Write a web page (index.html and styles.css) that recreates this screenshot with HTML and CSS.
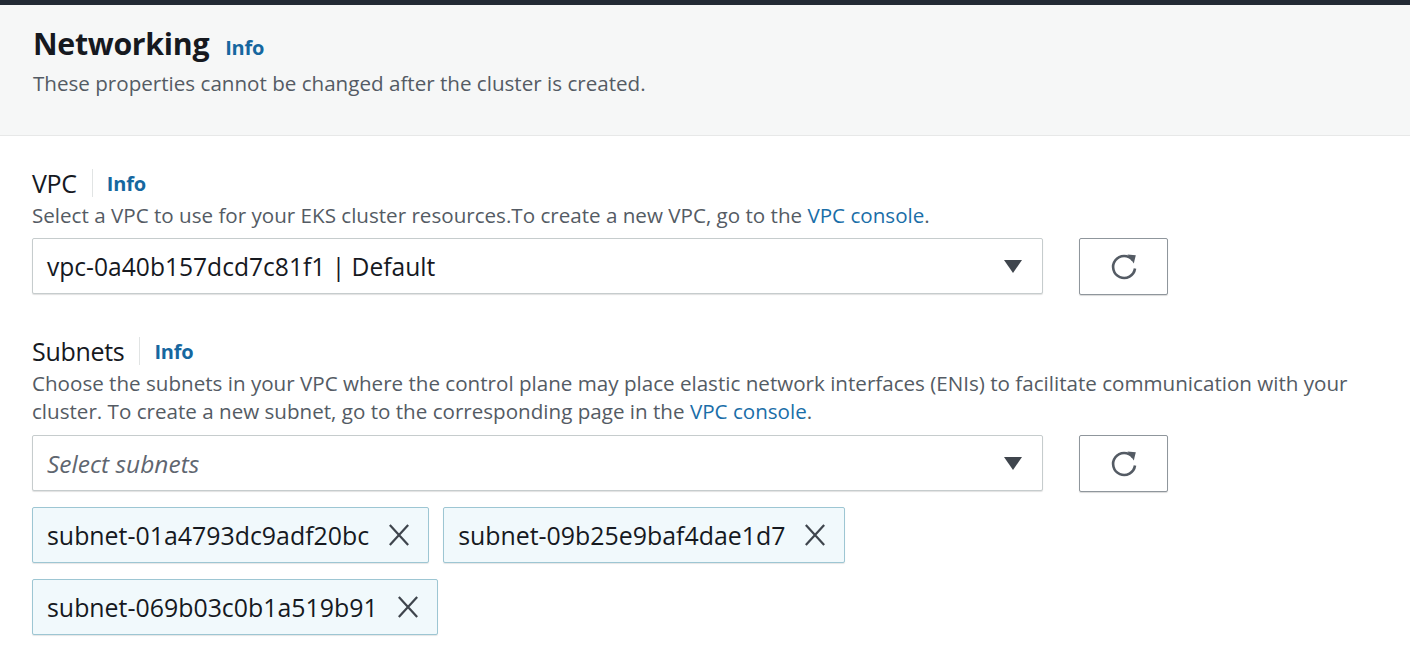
FILE: index.html
```html
<!DOCTYPE html>
<html>
<head>
<meta charset="utf-8">
<link rel="stylesheet" href="styles.css">
</head>
<body>
<div class="topbar"></div>
<section class="header">
  <div class="title-row">
    <h2 class="title">Networking</h2>
    <a class="info">Info</a>
  </div>
  <p class="desc">These properties cannot be changed after the cluster is created.</p>
</section>
<section class="content">
  <div class="field">
    <div class="label-row">
      <span class="label">VPC</span>
      <span class="sep"></span>
      <a class="info">Info</a>
    </div>
    <p class="desc">Select a VPC to use for your EKS cluster resources.To create a new VPC, go to the <a class="link">VPC console</a>.</p>
    <div class="control-row">
      <div class="select">
        <span class="value">vpc-0a40b157dcd7c81f1 | Default</span>
        <span class="caret"></span>
      </div>
      <button class="refresh">
        <svg width="34" height="34" viewBox="0 0 34 34"><path d="M25.8 10.2 A11 11 0 1 0 28 18.5" fill="none" stroke="#545b64" stroke-width="2.6"/><path d="M20.5 4.5 L28.8 5.2 L26.8 13.5 Z" fill="#545b64"/></svg>
      </button>
    </div>
  </div>
  <div class="field field-subnets">
    <div class="label-row">
      <span class="label">Subnets</span>
      <span class="sep"></span>
      <a class="info">Info</a>
    </div>
    <p class="desc">Choose the subnets in your VPC where the control plane may place elastic network interfaces (ENIs) to facilitate communication with your cluster. To create a new subnet, go to the corresponding page in the <a class="link">VPC console</a>.</p>
    <div class="control-row">
      <div class="select">
        <span class="placeholder">Select subnets</span>
        <span class="caret"></span>
      </div>
      <button class="refresh">
        <svg width="34" height="34" viewBox="0 0 34 34"><path d="M25.8 10.2 A11 11 0 1 0 28 18.5" fill="none" stroke="#545b64" stroke-width="2.6"/><path d="M20.5 4.5 L28.8 5.2 L26.8 13.5 Z" fill="#545b64"/></svg>
      </button>
    </div>
    <div class="tokens">
      <div class="token"><span>subnet-01a4793dc9adf20bc</span><svg class="x" width="24" height="24" viewBox="0 0 24 24"><path d="M2 1 L22 23 M22 1 L2 23" stroke="#3f454d" stroke-width="2.4"/></svg></div>
      <div class="token"><span>subnet-09b25e9baf4dae1d7</span><svg class="x" width="24" height="24" viewBox="0 0 24 24"><path d="M2 1 L22 23 M22 1 L2 23" stroke="#3f454d" stroke-width="2.4"/></svg></div>
      <div class="token"><span>subnet-069b03c0b1a519b91</span><svg class="x" width="24" height="24" viewBox="0 0 24 24"><path d="M2 1 L22 23 M22 1 L2 23" stroke="#3f454d" stroke-width="2.4"/></svg></div>
    </div>
  </div>
</section>
</body>
</html>
```
FILE: styles.css
```css
* { box-sizing: border-box; }
html, body { margin: 0; padding: 0; }
body {
  background: #ffffff;
  font-family: "Open Sans", "Noto Sans", sans-serif;
  color: #16191f;
  width: 1410px;
  height: 656px;
  overflow: hidden;
}
.topbar {
  height: 5px;
  background: #232a35;
}
.header {
  background: #f6f7f7;
  border-bottom: 1px solid #e7e8e8;
  padding: 21px 32px 38px 33px;
}
.title-row {
  display: flex;
  align-items: baseline;
  gap: 16px;
  height: 36px;
  line-height: 36px;
}
.title {
  margin: 0;
  font-size: 30.3px;
  font-weight: 700;
  letter-spacing: -0.3px;
  color: #16191f;
}
.info {
  color: #16679f;
  font-weight: 700;
  font-size: 20px;
  letter-spacing: -0.2px;
}
.header .desc { margin-top: 7px; }
.desc {
  margin: 0;
  font-size: 20.6px;
  line-height: 28px;
  color: #545b64;
  letter-spacing: 0;
  max-width: 1380px;
}
.link { color: #1a6ea8; }
.content {
  padding: 33px 32px 0 32px;
}
.label-row {
  display: flex;
  align-items: center;
  height: 28px;
}
.label {
  font-size: 25px;
  letter-spacing: -0.3px;
  color: #16191f;
}
.sep {
  width: 1px;
  height: 28px;
  background: #e1e4e4;
  margin: 0 14px 0 15px;
}
.field .desc { margin-top: 4px; }
.control-row {
  display: flex;
  gap: 36px;
  margin-top: 9px;
}
.select {
  width: 1011px;
  height: 56px;
  border: 1px solid #c6cccd;
  border-radius: 2px;
  box-shadow: 0 1px 1px rgba(0,0,0,0.12);
  display: flex;
  align-items: center;
  justify-content: space-between;
  padding: 0 20px 0 14px;
  background: #fff;
}
.value {
  font-size: 24.6px;
  letter-spacing: 0;
  color: #16191f;
}
.placeholder {
  font-size: 24.5px;
  font-style: italic;
  letter-spacing: 0;
  color: #5f6670;
}
.caret {
  width: 0; height: 0;
  border-left: 9px solid transparent;
  border-right: 9px solid transparent;
  border-top: 13px solid #3f454d;
}
.refresh {
  width: 89px;
  height: 57px;
  border: 1px solid #8f969c;
  border-radius: 2px;
  background: #fff;
  display: flex;
  align-items: center;
  justify-content: center;
  padding: 0;
  box-shadow: 0 1px 1px rgba(0,0,0,0.15);
}
.field-subnets { margin-top: 42px; }
.field-subnets .control-row { margin-top: 10px; }
.tokens {
  display: flex;
  flex-wrap: wrap;
  gap: 16px 14px;
  margin-top: 15px;
  width: 830px;
}
.token {
  height: 56px;
  display: flex;
  align-items: center;
  gap: 19px;
  padding: 0 18px 0 14px;
  background: #f1f9fc;
  border: 1px solid #9dc6d3;
  border-radius: 2px;
  box-shadow: 0 1px 1px rgba(0,0,0,0.1);
  font-size: 24.9px;
  letter-spacing: 0;
  color: #16191f;
}
.x { width: 22px; height: 24px; }
```
